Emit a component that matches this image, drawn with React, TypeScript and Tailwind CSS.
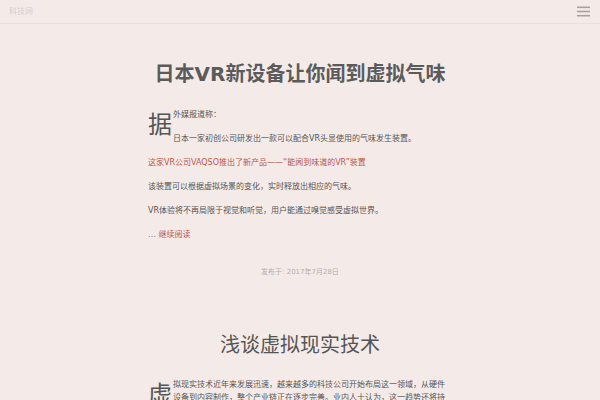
const FONT = "font-['DejaVu_Sans','Noto_Sans_CJK_SC',sans-serif]";

function Header() {
  return (
    <header className="flex h-[24px] items-center justify-between border-b border-[#e9dfdd] pl-[9px] pr-[10px]">
      <span className="text-[8px] leading-none text-[#d8cdcc]">科技网</span>
      <svg width="13" height="11" viewBox="0 0 13 11" className="text-[#a9a1a0]">
        <rect x="0" y="0.5" width="13" height="1.6" fill="currentColor" />
        <rect x="0" y="4.7" width="13" height="1.6" fill="currentColor" />
        <rect x="0" y="8.9" width="13" height="1.6" fill="currentColor" />
      </svg>
    </header>
  );
}

function DropCap({ char }: { char: string }) {
  return <span className="float-left mr-[1px] mt-[1px] text-[24px] leading-[32px] text-[#555]">{char}</span>;
}

export default function App() {
  return (
    <div className={`${FONT} min-h-screen w-full bg-[#f4ebe9] text-[#555]`}>
      <Header />
      <main className="mx-auto w-[304px] pt-[36px]">
        <article>
          <h2 className="-mx-[20px] mb-[20px] whitespace-nowrap text-center text-[20px] font-bold leading-[28px] text-[#5b5b5b]">
            日本VR新设备让你闻到虚拟气味
          </h2>
          <div className="text-[8px] leading-[13px]">
            <p className="mb-[11px]">
              <DropCap char="据" />
              外媒报道称：
            </p>
            <p className="mb-[11px]">日本一家初创公司研发出一款可以配合VR头显使用的气味发生装置。</p>
            <p className="mb-[11px] text-[#b9574a]">这家VR公司VAQSO推出了新产品——“能闻到味道的VR”装置</p>
            <p className="mb-[11px]">该装置可以根据虚拟场景的变化，实时释放出相应的气味。</p>
            <p className="mb-[11px]">VR体验将不再局限于视觉和听觉，用户能通过嗅觉感受虚拟世界。</p>
            <p>
              <span className="text-[#777]">… </span>
              <span className="text-[#b9574a]">继续阅读</span>
            </p>
          </div>
          <div className="mt-[26px] text-center text-[7px] leading-[10px] text-[#b5abaa]">发布于: 2017年7月28日</div>
        </article>
        <article className="mt-[54px]">
          <h2 className="mb-[19px] text-center text-[20px] leading-[28px] text-[#555]">浅谈虚拟现实技术</h2>
          <p className="text-[8px] leading-[13px]">
            <DropCap char="虚" />
            拟现实技术近年来发展迅速，越来越多的科技公司开始布局这一领域，从硬件设备到内容制作，整个产业链正在逐步完善。业内人士认为，这一趋势还将持续。
          </p>
        </article>
      </main>
    </div>
  );
}
